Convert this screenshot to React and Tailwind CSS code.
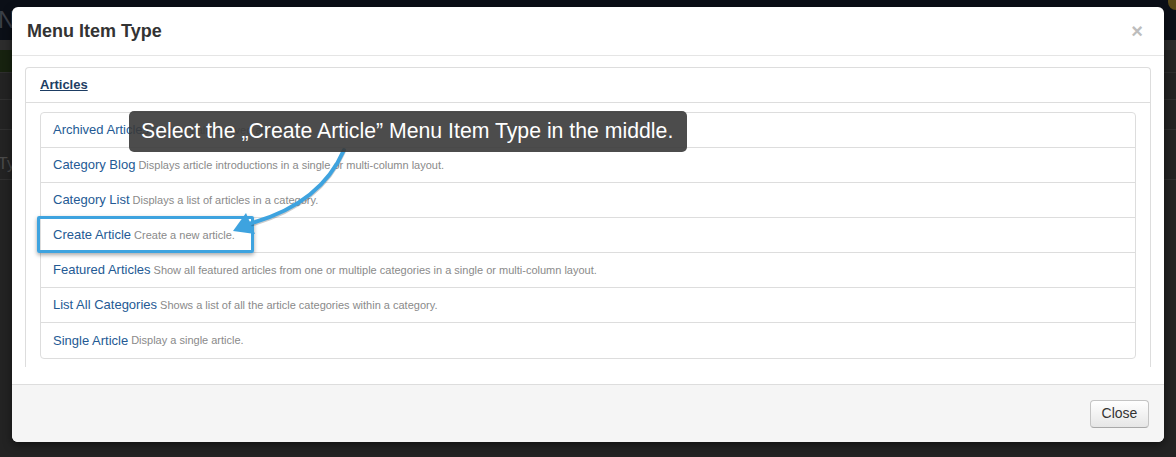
import { useState } from 'react';

const items = [
  { title: 'Archived Articles', desc: 'Displays all archived articles.' },
  { title: 'Category Blog', desc: 'Displays article introductions in a single or multi-column layout.' },
  { title: 'Category List', desc: 'Displays a list of articles in a category.' },
  { title: 'Create Article', desc: 'Create a new article.' },
  { title: 'Featured Articles', desc: 'Show all featured articles from one or multiple categories in a single or multi-column layout.' },
  { title: 'List All Categories', desc: 'Shows a list of all the article categories within a category.' },
  { title: 'Single Article', desc: 'Display a single article.' },
];

const App = () => {
  const [open] = useState(true);

  return (
    <div className="relative w-full h-[457px] overflow-hidden bg-[#232323] font-['Liberation_Sans',Arial,sans-serif]">

      {/* page behind the modal (dimmed) */}
      <div className="flex flex-col">
        <div className="h-[40px] bg-[#0b0f17] flex items-center justify-between">
          <span className="text-[24px] text-[#3b3f47] -ml-[2px] leading-none">N</span>
          <span className="w-[8px] h-[10px] self-start rounded-bl-full bg-[#5a4a1a]"></span>
        </div>
        <div className="h-[10px] bg-[#2c2c2c]"></div>
        <div className="h-[23px] border-b border-[#2e2e2e]">
          <div className="h-full w-[600px] bg-[#17220f]"></div>
        </div>
        <div className="h-[27px] border-b border-[#303030]"></div>
        <div className="h-[30px] border-b border-[#303030]"></div>
        <div className="h-[50px] border-b border-[#303030] flex items-start pt-[26px]">
          <span className="text-[16px] leading-none text-[#4a4a4a] -ml-[2px]">Type</span>
        </div>
      </div>

      {open && (
        <div className="absolute left-[12px] top-[7px] w-[1152px] h-[435px] bg-white rounded-[6px] shadow-[0_3px_9px_rgba(0,0,0,0.5)] flex flex-col overflow-hidden">

          <header className="h-[49px] shrink-0 border-b border-[#e5e5e5] flex items-center justify-between pl-[15px] pr-[21px]">
            <h3 className="text-[18px] font-bold text-[#333]">Menu Item Type</h3>
            <span className="text-[20px] font-bold text-[#bdbdbd] leading-none">×</span>
          </header>

          <div className="relative flex-1 px-[13px] pt-[11px] pb-[17px] overflow-hidden">
            <div className="h-full border-t border-l border-r border-[#dddddd] rounded-t-[4px] flex flex-col">
              <div className="h-[35px] shrink-0 border-b border-[#dddddd] flex items-center px-[14px]">
                <a className="text-[13px] font-bold text-[#1d3d63] underline">Articles</a>
              </div>
              <div className="px-[14px] pt-[9px]">
                <ul className="border border-[#dddddd] rounded-[4px]">
                  {items.map((item, i) => (
                    <li
                      key={item.title}
                      className={`h-[35px] flex items-center px-[12px] ${i < items.length - 1 ? 'border-b border-[#dddddd]' : ''}`}
                    >
                      <a className="text-[13px] text-[#245a94]">{item.title}</a>
                      <span className="ml-[3px] text-[11px] text-[#8a8a8a]">{item.desc}</span>
                    </li>
                  ))}
                </ul>
              </div>
            </div>
          </div>

          <footer className="h-[58px] shrink-0 border-t border-[#dddddd] bg-[#f5f5f5] flex items-center justify-end px-[15px]">
            <button className="h-[28px] w-[59px] rounded-[4px] border border-[#c4c4c4] border-b-[#a8a8a8] bg-gradient-to-b from-white to-[#e6e6e6] text-[14px] text-[#333] shadow-[inset_0_1px_0_rgba(255,255,255,0.3)]">
              Close
            </button>
          </footer>
        </div>
      )}

      {/* annotation: highlight box */}
      <div className="absolute left-[37px] top-[216px] w-[217px] h-[37px] border-[3px] border-[#3ea3df] rounded-[2px] shadow-[0_2px_4px_rgba(0,0,0,0.35)]"></div>

      {/* annotation: arrow */}
      <svg className="absolute left-0 top-0 pointer-events-none" width="1176" height="457">
        <path d="M344 150 Q320 205 248 224" fill="none" stroke="rgba(0,0,0,0.2)" strokeWidth="4" transform="translate(0,1.5)" />
        <path d="M344 150 Q320 205 248 224" fill="none" stroke="#3ea3df" strokeWidth="4" strokeLinecap="round" />
        <polygon points="233,231 246,213 255,234" fill="#3ea3df" />
      </svg>

      {/* annotation: tooltip */}
      <div className="absolute left-[129px] top-[111px] w-[558px] h-[41px] rounded-[5px] bg-[rgba(57,57,57,0.9)] flex items-center px-[12px]">
        <span className="text-[21.25px] text-white whitespace-nowrap">Select the „Create Article” Menu Item Type in the middle.</span>
      </div>
    </div>
  );
};

export default App;
